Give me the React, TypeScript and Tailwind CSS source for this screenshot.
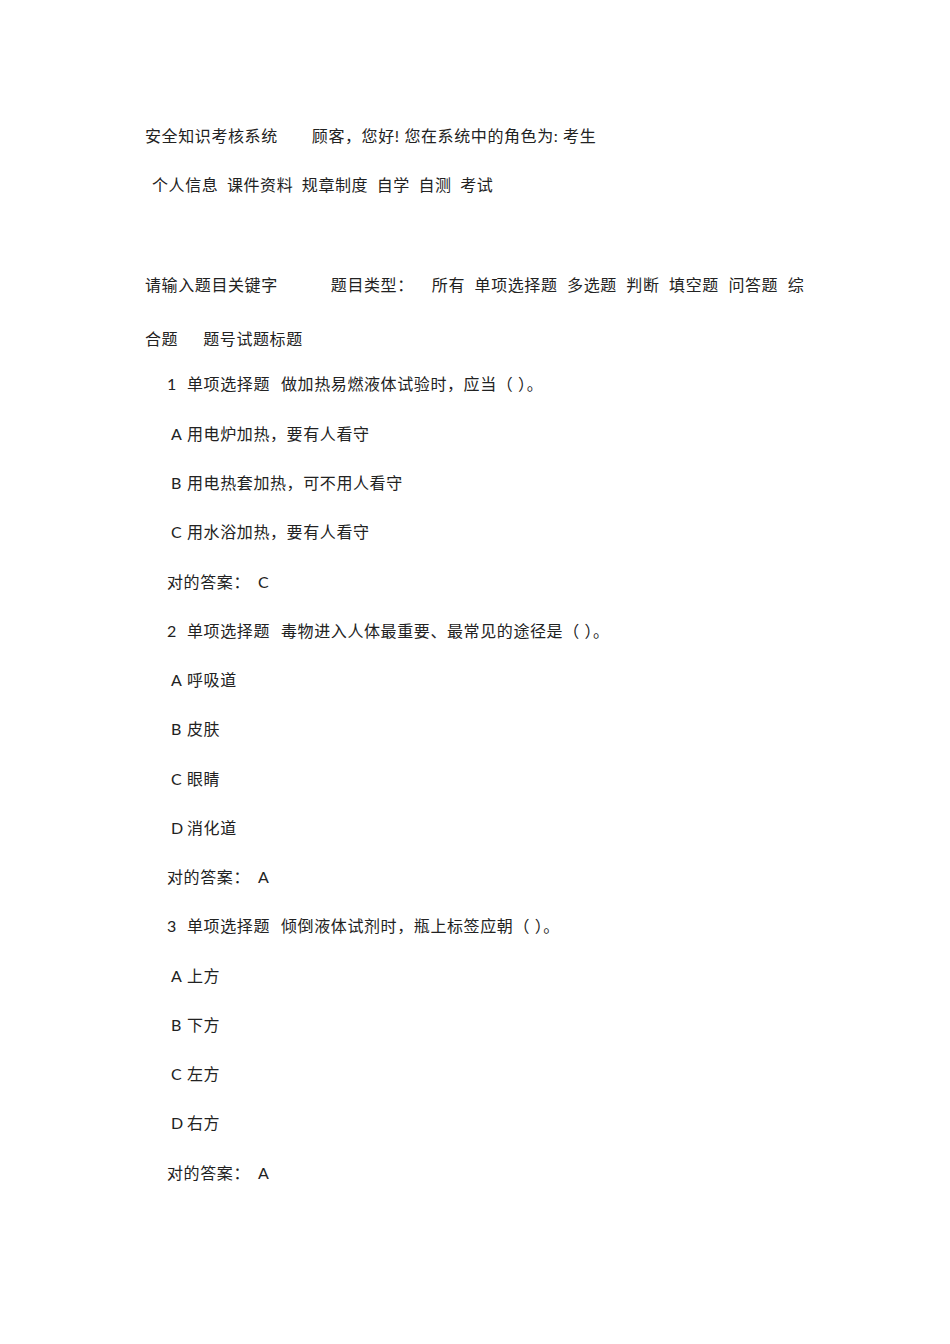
import React from "react";

const Row = ({
  children,
  className = "",
  h = "h-[49.28px]",
}: {
  children: React.ReactNode;
  className?: string;
  h?: string;
}) => <div className={`flex ${h} items-center whitespace-nowrap ${className}`}>{children}</div>;

type Q = { n: string; stem: string; opts: [string, string][]; ans: string };

const questions: Q[] = [
  {
    n: "1",
    stem: "做加热易燃液体试验时，应当（ ）。",
    opts: [
      ["A", "用电炉加热，要有人看守"],
      ["B", "用电热套加热，可不用人看守"],
      ["C", "用水浴加热，要有人看守"],
    ],
    ans: "C",
  },
  {
    n: "2",
    stem: "毒物进入人体最重要、最常见的途径是（ ）。",
    opts: [
      ["A", "呼吸道"],
      ["B", "皮肤"],
      ["C", "眼睛"],
      ["D", "消化道"],
    ],
    ans: "A",
  },
  {
    n: "3",
    stem: "倾倒液体试剂时，瓶上标签应朝（ ）。",
    opts: [
      ["A", "上方"],
      ["B", "下方"],
      ["C", "左方"],
      ["D", "右方"],
    ],
    ans: "A",
  },
];

export default function App() {
  return (
    <div className="min-h-[1344px] w-[950px] bg-white pl-[145px] pt-[111px] font-['Lato','Noto_Sans_CJK_SC',sans-serif] text-[16px] font-normal tracking-[0.6px] text-[#222]">
      <Row>
        <span>安全知识考核系统</span>
        <span className="ml-[34px]">顾客，您好! 您在系统中的角色为: 考生</span>
      </Row>
      <Row h="h-[50px]" className="gap-[8.5px] pl-[7px]">
        <span>个人信息</span>
        <span>课件资料</span>
        <span>规章制度</span>
        <span>自学</span>
        <span>自测</span>
        <span>考试</span>
      </Row>
      <Row h="h-[50.3px]">
        <span>&nbsp;</span>
      </Row>
      <Row>
        <span>请输入题目关键字</span>
        <span className="ml-[53px]">题目类型：</span>
        <div className="ml-[18px] flex gap-[9.5px]">
          <span>所有</span>
          <span>单项选择题</span>
          <span>多选题</span>
          <span>判断</span>
          <span>填空题</span>
          <span>问答题</span>
          <span>综</span>
        </div>
      </Row>
      <Row h="h-[50px]" className="pt-[8px]">
        <span>合题</span>
        <span className="ml-[25px]">题号试题标题</span>
      </Row>
      {questions.map((q) => (
        <React.Fragment key={q.n}>
          <Row className="pl-[22px]">
            <span className="w-[20px]">{q.n}</span>
            <span>单项选择题</span>
            <span className="ml-[11px]">{q.stem}</span>
          </Row>
          {q.opts.map(([l, t]) => (
            <Row key={l} className="pl-[26px]">
              <span className="w-[16px]">{l}</span>
              <span>{t}</span>
            </Row>
          ))}
          <Row className="pl-[22px]">
            <span className="w-[91px]">对的答案：</span>
            <span>{q.ans}</span>
          </Row>
        </React.Fragment>
      ))}
    </div>
  );
}
